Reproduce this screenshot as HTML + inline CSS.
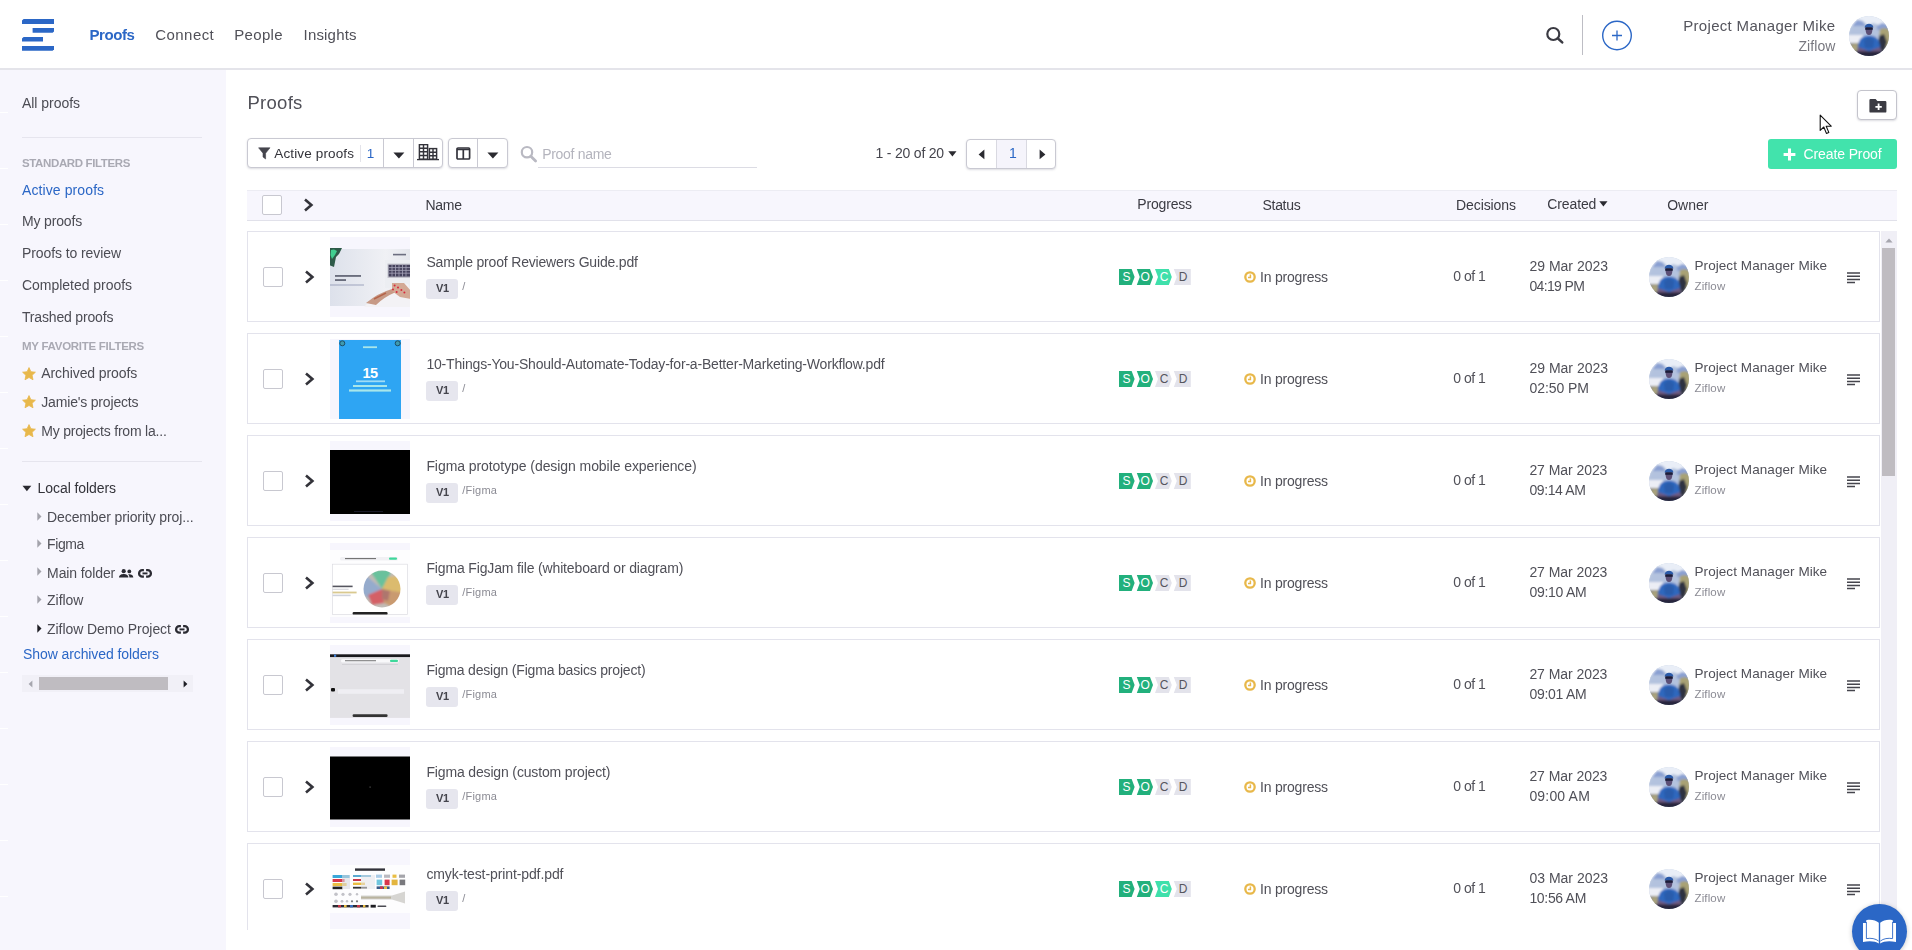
<!DOCTYPE html>
<html lang="en">
<head>
<meta charset="utf-8">
<title>Proofs</title>
<style>
*{box-sizing:border-box;margin:0;padding:0}
html,body{width:1912px;height:950px;overflow:hidden;background:#fff}
body{font-family:"Liberation Sans",sans-serif;position:relative;color:#45454d}
.abs{position:absolute}
span.t{position:absolute;white-space:nowrap;line-height:20px;height:20px}
#hdr{position:absolute;left:0;top:0;width:1912px;height:70px;background:#fff;border-bottom:2px solid #e4e4ea}
#side{position:absolute;left:0;top:70px;width:226px;height:880px;background:#f7f6fd}
.hr{position:absolute;left:22px;width:180px;height:1px;background:#e6e5ee}
.btn{position:absolute;background:#fff;border:1px solid #c9c9d2;border-radius:4px;box-shadow:0 1px 2px rgba(60,60,90,.18)}
.vd{position:absolute;top:0;width:1px;height:100%;background:#c9c9d2}
#thead{position:absolute;left:247px;top:190px;width:1650px;height:31px;background:#f7f6fd;border-top:1px solid #ececf3;border-bottom:1px solid #e1e1ea}
.cb{position:absolute;width:20px;height:20px;background:#fff;border:1px solid #c8c8d0;border-radius:2px}
.row{position:absolute;left:0;width:1633px;height:91px;border:1px solid #e3e3ec;background:#fff}
.row .chev{position:absolute}
.row .thumb{position:absolute;left:82px;top:5px;width:80px;height:80px;background:#f7f6fd;overflow:hidden}
.row .v1{position:absolute;left:178px;top:47px;width:32px;height:20px;background:#e6e6ee;border-radius:3px}
.row .prog{position:absolute;left:871px;top:37px}
.row .clock{position:absolute;left:996px;top:39px}
.row .av{position:absolute;left:1401px;top:25px}
.row .menu{position:absolute;left:1599px;top:40px}
</style>
</head>
<body>
<svg width="0" height="0" style="position:absolute">
<defs>
<g id="pg-base">
<path d="M0 0H12.6L15.6 8L12.6 16H0Z" fill="#22b07c"/>
<path d="M17.8 0H31L34 8L31 16H17.8L20.8 8Z" fill="#22b07c"/>
</g>
<g id="pg-cg">
<use href="#pg-base"/>
<path d="M36 0H49.8L52.8 8L49.8 16H36L39 8Z" fill="#e3e3eb"/>
<path d="M54.8 0H71.8V16H54.8L57.8 8Z" fill="#e3e3eb"/>
<g font-family="Liberation Sans, sans-serif" font-size="12" text-anchor="middle">
<text x="7.6" y="12.3" fill="#fff">S</text><text x="26.2" y="12.3" fill="#fff">O</text><text x="45" y="12.3" fill="#55555d">C</text><text x="64" y="12.3" fill="#55555d">D</text></g>
</g>
<g id="pg-cl">
<use href="#pg-base"/>
<path d="M36 0H49.8L52.8 8L49.8 16H36L39 8Z" fill="#3fe0ab"/>
<path d="M54.8 0H71.8V16H54.8L57.8 8Z" fill="#e3e3eb"/>
<g font-family="Liberation Sans, sans-serif" font-size="12" text-anchor="middle">
<text x="7.6" y="12.3" fill="#fff">S</text><text x="26.2" y="12.3" fill="#fff">O</text><text x="45" y="12.3" fill="#fff">C</text><text x="64" y="12.3" fill="#55555d">D</text></g>
</g>
<g id="clock"><circle cx="6" cy="6" r="4.7" fill="none" stroke="#e8b84a" stroke-width="2.3"/><path d="M6.4 3.4V6.4H4" fill="none" stroke="#e8b84a" stroke-width="1.5"/></g>
<g id="menu"><path d="M0 1H13M0 4.2H13M0 7.4H13M0 10.6H8" stroke="#45454d" stroke-width="1.5" fill="none"/></g>
<g id="avatar">
<clipPath id="avc"><circle cx="20" cy="20" r="20"/></clipPath>
<filter id="bl1" x="-10%" y="-10%" width="120%" height="120%"><feGaussianBlur stdDeviation="0.85"/></filter>
<g clip-path="url(#avc)">
<rect width="40" height="40" fill="#c3cfe3"/>
<g filter="url(#bl1)">
<rect x="-2" y="-2" width="44" height="12" fill="#e9eef7"/>
<path d="M2 12L8 4L14 5L19 10L24 7L30 9L34 7L42 12V22H-2Z" fill="#b3c2de"/>
<path d="M3 10L8 4L13 5L17 10Z" fill="#8aa0d2"/>
<path d="M28 10L33 7L40 9V14H28Z" fill="#8aa0d2"/>
<rect x="-2" y="19" width="16" height="9" fill="#eceef5"/>
<rect x="-2" y="27" width="44" height="16" fill="#8c8b86"/>
<path d="M31 13L36 12L42 14V30H33L30 22Z" fill="#a9a274"/>
<path d="M30 20L35 18L38 26L35 36L29 32Z" fill="#2f3340"/>
<path d="M2 29L8 27L10 38L3 38Z" fill="#a9a27c"/>
<path d="M8.6 36C8.6 24 12 19.4 20 19.4S31.4 24 31.4 36Z" fill="#2e68be"/>
<path d="M15 24L20 21L25 24L24 32H16Z" fill="#2a5cab"/>
<path d="M9 31L20 35L31 31L32 36L20 38L8 36Z" fill="#6f5a80"/>
<rect x="4" y="35.4" width="32" height="7" fill="#28283c"/>
</g>
<g filter="url(#bl4)">
<ellipse cx="20" cy="14.2" rx="3.3" ry="4.8" fill="#5c5076"/>
<path d="M15.6 11.6C15.6 6.4 24.4 6.4 24.4 11.6Z" fill="#2b5aa8"/>
<rect x="16.2" y="11.4" width="7.6" height="2.4" fill="#1c1c38"/>
</g>
</g>
</g>
<filter id="bl4" x="-10%" y="-10%" width="120%" height="120%"><feGaussianBlur stdDeviation="0.35"/></filter>
<!-- thumbnails -->
<filter id="bl3" x="-5%" y="-5%" width="110%" height="110%"><feGaussianBlur stdDeviation="0.9"/></filter>
<filter id="bl2" x="-5%" y="-5%" width="110%" height="110%"><feGaussianBlur stdDeviation="0.5"/></filter>
<g id="t1">
<linearGradient id="t1g" x1="0" y1="0" x2="1" y2="0"><stop offset="0" stop-color="#dde1eb"/><stop offset=".45" stop-color="#e9ebf1"/><stop offset=".7" stop-color="#f0f1f5"/><stop offset="1" stop-color="#e4e6ec"/></linearGradient>
<rect x="0" y="12" width="80" height="57" fill="url(#t1g)"/>
<g filter="url(#bl2)">
<rect x="55" y="23" width="27" height="28" fill="#eceef2"/>
<rect x="57.5" y="26.6" width="24" height="14.4" fill="#c4c4cd"/>
<rect x="58.6" y="27.8" width="23" height="11.8" fill="#45425c"/>
<path d="M58.6 30.6H82M58.6 33.4H82M58.6 36.2H82M62 27.8V39.6M65.5 27.8V39.6M69 27.8V39.6M72.5 27.8V39.6M76 27.8V39.6" stroke="#a5a3b8" stroke-width=".8"/>
<path d="M-1 11H12L9 17L6 20L4 30L-1 28Z" fill="#2f5a48"/>
<path d="M1 13L4 12.5L7 14L5 18L2 22L0.5 18Z" fill="#3fcf90"/>
<path d="M34 70Q44 58 62 52L66 46L78 47L82 56V70Z" fill="#f3f2f5"/>
<path d="M36 66Q48 56 62 52L66 55Q54 60 46 68Z" fill="#c79a86"/>
<path d="M62 46L74 46L81 54V62L70 60L62 54Z" fill="#d3a995"/>
<path d="M44 62L56 56" stroke="#b5654a" stroke-width="1.4"/>
</g>
<rect x="63" y="16.8" width="13" height="1.6" fill="#6c6e80"/>
<rect x="5" y="38.2" width="26" height="1.5" fill="#4d5062"/>
<rect x="5" y="42.3" width="11" height="1.5" fill="#4d5062"/>
<rect x="0" y="47.6" width="34" height="0.8" fill="#8d95b2"/>
<g fill="#d8283c"><circle cx="64.6" cy="48.6" r="1"/><circle cx="68" cy="50.4" r="1"/><circle cx="71.4" cy="53" r="1"/><circle cx="74.4" cy="55.6" r="1"/><circle cx="63" cy="52.6" r="1"/><circle cx="66.6" cy="55" r="1"/></g>
</g>
<g id="t2">
<rect x="9" y="1" width="62" height="79" fill="#2ea5f3"/>
<circle cx="12.3" cy="4.3" r="2.5" fill="#3f9ab0" stroke="#1d4e66" stroke-width="1"/><circle cx="67.7" cy="4.3" r="2.5" fill="#3f9ab0" stroke="#1d4e66" stroke-width="1"/>
<rect x="33" y="7.3" width="14" height="1.8" fill="#a8e6ea"/>
<text x="40" y="38.6" font-family="Liberation Sans, sans-serif" font-size="14.5" font-weight="bold" fill="#fff" text-anchor="middle" letter-spacing="-0.6">15</text>
<rect x="26" y="41.4" width="29" height="1.8" fill="#9fdcf6"/>
<rect x="23" y="46" width="34" height="2" fill="#a8e6ea"/>
<rect x="19" y="50.4" width="42" height="2.2" fill="#a8e6ea"/>
</g>
<g id="t3"><rect x="0" y="9" width="80" height="64" fill="#000"/><rect x="24" y="70" width="29" height=".6" fill="#2a2a44"/></g>
<g id="t4">
<rect x="0" y="7" width="80" height="67" fill="#fdfdfe"/>
<rect x="10" y="14" width="58" height="3.4" rx="1.5" fill="#f1f1f4"/>
<rect x="15" y="15.2" width="31" height="0.9" fill="#555"/>
<rect x="59" y="14.6" width="8" height="2.2" rx="1" fill="#3fd89b"/>
<rect x="2.4" y="21.2" width="75" height="50.2" fill="#fff" stroke="#dcdce2" stroke-width="0.7"/>
<clipPath id="ballc"><circle cx="52" cy="46" r="18.5"/></clipPath>
<g clip-path="url(#ballc)"><g filter="url(#bl3)">
<rect x="28" y="22" width="48" height="48" fill="#bdb7b0"/>
<path d="M52 46L33 30L30 50L40 56Z" fill="#7f9fd0"/>
<path d="M52 46L40 28L62 26L58 36Z" fill="#3fbf8c"/>
<path d="M52 46L58 34L74 32L74 52Z" fill="#e3b74a"/>
<path d="M52 46L74 50L66 66L54 60Z" fill="#c9874c"/>
<path d="M52 46L54 60L42 62L38 52Z" fill="#d8363e"/>
<path d="M52 46L60 48L58 58L52 56Z" fill="#a2544a"/>
<rect x="28" y="22" width="48" height="48" fill="#c9c6c4" opacity=".3"/>
</g></g>
<rect x="2.6" y="42.6" width="20" height="1.6" fill="#55555f"/>
<rect x="2.6" y="45.8" width="16" height="0.8" fill="#c4c4cc"/>
<rect x="2.6" y="48.6" width="24" height="1.8" fill="#d9c98f"/>
<rect x="2.6" y="51.6" width="18" height="1.6" fill="#cfd3dc"/>
<rect x="22.6" y="69" width="35" height="2.6" rx="1.2" fill="#222"/>
</g>
<g id="t5">
<rect x="0" y="9.3" width="80" height="3" fill="#1a1a1e"/>
<rect x="0" y="12.3" width="80" height="60.6" fill="#e3e2e6"/>
<rect x="4" y="9.6" width="2.2" height="2.2" fill="#3e7fd8"/>
<rect x="11" y="14" width="58" height="3.6" rx="1.6" fill="#f8f8fa"/>
<rect x="15" y="15.3" width="31" height="0.9" fill="#666"/>
<rect x="60" y="14.7" width="8" height="2.2" rx="1" fill="#3fd89b"/>
<rect x="12" y="19" width="56" height="0.8" fill="#cfcfd4"/>
<rect x="1" y="43" width="4" height="3.4" rx="1" fill="#111"/>
<rect x="8" y="44.2" width="66" height="4.6" fill="#f1f0f4" opacity=".85"/>
<rect x="22.6" y="69.2" width="35" height="2.7" rx="1.2" fill="#333"/>
</g>
<g id="t6"><rect x="0" y="9.5" width="80" height="63" fill="#000"/><rect x="39.5" y="39.5" width="1.2" height="1.2" fill="#555"/></g>
<g id="t7">
<rect x="0" y="16" width="80" height="48" fill="#fdfdfe"/>
<rect x="25" y="19.4" width="30" height="2.4" fill="#33333a"/>
<rect x="2.6" y="26" width="17" height="3" fill="#39a6d8"/><rect x="2.6" y="30" width="12" height="3" fill="#d8364a"/><rect x="2.6" y="34" width="14" height="3" fill="#e9bd43"/><rect x="2.6" y="37.6" width="10" height="2.6" fill="#222"/>
<rect x="12" y="26" width="8" height="14" fill="#d9d9de" opacity=".6"/>
<rect x="23" y="26" width="18" height="2" fill="#5aa9d0"/><rect x="23" y="30" width="8" height="2" fill="#c8364a"/><rect x="23" y="33.6" width="12" height="2.4" fill="#e9bd43"/><rect x="23" y="37.8" width="14" height="1.8" fill="#333"/>
<rect x="31" y="26" width="14" height="14" fill="#e4e4e8" opacity=".55"/>
<rect x="46" y="25.6" width="6" height="3.2" fill="#a9cbe6"/><rect x="54" y="25.6" width="6" height="3.2" fill="#b9b9c1"/><rect x="62.5" y="25.6" width="4" height="3.2" fill="#e9bd43"/><rect x="69" y="25.6" width="6" height="3.2" fill="#a4a4aa"/>
<rect x="46.6" y="30.6" width="5.6" height="5.6" fill="#6fc6de"/><rect x="54.6" y="30.6" width="5" height="5.6" fill="#d8364a"/><rect x="61.6" y="30.6" width="6" height="5.6" fill="#e3b53e"/><rect x="69.6" y="30.6" width="5.6" height="5.6" fill="#77777c"/>
<rect x="46.6" y="37.4" width="13" height="2.6" fill="#3a5a86"/><rect x="50" y="37.4" width="3" height="2.6" fill="#c8364a"/><rect x="54" y="37.4" width="3" height="2.6" fill="#e9bd43"/>
<g fill="#c2c2c8"><circle cx="6" cy="45.3" r="1.8"/><circle cx="13" cy="45.3" r="1.6"/><circle cx="20" cy="45.3" r="1.6"/><circle cx="27" cy="45.3" r="1.2"/><circle cx="6" cy="52.3" r="1.8"/><circle cx="12" cy="52.3" r="1.4"/><circle cx="17" cy="52.3" r="1.2"/></g>
<g fill="#77777c"><circle cx="22" cy="52.3" r="1.1"/><circle cx="27" cy="52.3" r="1.1"/></g>
<path d="M31 46.6H62L75 42.6V54.6L62 50.6H31Z" fill="#d6d5d2"/>
<rect x="31" y="47.6" width="30" height="2" fill="#b9b49f"/>
<rect x="2.6" y="56" width="36" height="2.4" fill="#2b2b33"/>
<rect x="8" y="56" width="3" height="2.4" fill="#c8364a"/><rect x="14" y="56" width="2.6" height="2.4" fill="#e9bd43"/><rect x="20" y="56" width="3" height="2.4" fill="#3a6fc0"/><rect x="27" y="56" width="3" height="2.4" fill="#c8364a"/><rect x="33" y="56" width="2.4" height="2.4" fill="#e9bd43"/>
<rect x="40.6" y="55.8" width="5.2" height="2.8" fill="#1d1d22"/>
<rect x="47.4" y="56.4" width="9" height="1.6" rx=".8" fill="#4a4a52"/>
</g>
</defs>
</svg>

<!-- ================= HEADER ================= -->
<div id="hdr">
<svg class="abs" style="left:22px;top:19px" width="32" height="32" viewBox="0 0 32 32">
<g fill="#2b67c6">
<path d="M1.6 0H32V4.9H0V1.6Z"/>
<path d="M10.6 9H32V12.4L30.6 13.8H10.6Z"/>
<path d="M1.6 17.9H21V22.6H0V19.5Z"/>
<path d="M0 26.9H32V30.3L30.6 31.7H0Z"/>
</g></svg>
<!-- search -->
<svg class="abs" style="left:1546px;top:26px" width="19" height="19" viewBox="0 0 19 19"><circle cx="7.3" cy="8" r="6" fill="none" stroke="#3a3a42" stroke-width="2.2"/><path d="M11.8 12.4L16.2 16.4" stroke="#3a3a42" stroke-width="2.6" stroke-linecap="round"/></svg>
<div class="abs" style="left:1582px;top:15px;width:1px;height:40px;background:#bdbdc4"></div>
<svg class="abs" style="left:1601px;top:20px" width="32" height="32" viewBox="0 0 32 32"><circle cx="16" cy="15.5" r="14.3" fill="none" stroke="#2b67c6" stroke-width="1.4"/><path d="M16 10.5V20.5M11 15.5H21" stroke="#2b67c6" stroke-width="1.3"/></svg>
<svg class="abs" style="left:1849px;top:16px" width="40" height="40" viewBox="0 0 40 40"><use href="#avatar"/></svg>
</div>

<!-- ================= SIDEBAR ================= -->
<div id="side"></div>
<div class="abs" style="left:0;top:112px;width:8px;height:1px;background:#fff"></div><div class="abs" style="left:0;top:168px;width:8px;height:1px;background:#fff"></div><div class="abs" style="left:0;top:224px;width:8px;height:1px;background:#fff"></div><div class="abs" style="left:0;top:280px;width:8px;height:1px;background:#fff"></div><div class="abs" style="left:0;top:336px;width:8px;height:1px;background:#fff"></div><div class="abs" style="left:0;top:392px;width:8px;height:1px;background:#fff"></div><div class="abs" style="left:0;top:448px;width:8px;height:1px;background:#fff"></div><div class="abs" style="left:0;top:504px;width:8px;height:1px;background:#fff"></div><div class="abs" style="left:0;top:560px;width:8px;height:1px;background:#fff"></div><div class="abs" style="left:0;top:616px;width:8px;height:1px;background:#fff"></div><div class="abs" style="left:0;top:672px;width:8px;height:1px;background:#fff"></div><div class="abs" style="left:0;top:728px;width:8px;height:1px;background:#fff"></div><div class="abs" style="left:0;top:784px;width:8px;height:1px;background:#fff"></div><div class="abs" style="left:0;top:840px;width:8px;height:1px;background:#fff"></div><div class="abs" style="left:0;top:896px;width:8px;height:1px;background:#fff"></div>
<div class="hr" style="top:137px"></div>
<div class="hr" style="top:461px"></div>
<!-- stars -->
<svg class="abs" style="left:21.5px;top:366.5px" width="14" height="14" viewBox="0 0 14 14"><use href="#star"/></svg>
<svg class="abs" style="left:21.5px;top:395.3px" width="14" height="14" viewBox="0 0 14 14"><use href="#star"/></svg>
<svg class="abs" style="left:21.5px;top:424.4px" width="14" height="14" viewBox="0 0 14 14"><use href="#star"/></svg>
<svg width="0" height="0" style="position:absolute"><defs>
<path id="star" d="M7 .6L8.9 4.7L13.4 5.2L10.1 8.3L11 12.8L7 10.5L3 12.8L3.9 8.3L.6 5.2L5.1 4.7Z" fill="#e8b84b" stroke="#e8b84b" stroke-width=".8" stroke-linejoin="round"/>
<g id="link" fill="none" stroke="#2a2a32"><path d="M5.9 1.15H4.35A3.25 3.25 0 0 0 4.35 7.65H5.9M8.1 1.15H9.65A3.25 3.25 0 0 1 9.65 7.65H8.1" stroke-width="2.25"/><path d="M4.5 4.4H9.5" stroke-width="1.9"/></g>
<g id="ppl" fill="#2a2a32"><circle cx="4.7" cy="2.2" r="2.1"/><path d="M0 8.6C0 5.6 3 5 4.7 5S9.4 5.6 9.4 8.6Z"/><circle cx="10.3" cy="2.4" r="1.9"/><path d="M10.4 8.6C10.4 6.8 9.8 5.8 9 5.3C11.4 4.8 14.3 5.6 14.3 8.6Z"/></g>
</defs></svg>
<!-- tree arrows -->
<svg class="abs" style="left:22px;top:485px" width="10" height="7" viewBox="0 0 10 7"><path d="M.5 .8H9.3L4.9 6.2Z" fill="#2a2a30"/></svg>
<svg class="abs" style="left:36.6px;top:511.6px" width="5" height="9" viewBox="0 0 5 9"><path d="M.3 .3L4.5 4.5L.3 8.7Z" fill="#a3a3ab"/></svg>
<svg class="abs" style="left:36.6px;top:538.6px" width="5" height="9" viewBox="0 0 5 9"><path d="M.3 .3L4.5 4.5L.3 8.7Z" fill="#a3a3ab"/></svg>
<svg class="abs" style="left:36.6px;top:567.4px" width="5" height="9" viewBox="0 0 5 9"><path d="M.3 .3L4.5 4.5L.3 8.7Z" fill="#a3a3ab"/></svg>
<svg class="abs" style="left:36.6px;top:595px" width="5" height="9" viewBox="0 0 5 9"><path d="M.3 .3L4.5 4.5L.3 8.7Z" fill="#a3a3ab"/></svg>
<svg class="abs" style="left:36.6px;top:623.8px" width="5" height="9" viewBox="0 0 5 9"><path d="M.3 .3L4.5 4.5L.3 8.7Z" fill="#1e1e24"/></svg>
<svg class="abs" style="left:119.4px;top:568.9px" width="15" height="9" viewBox="0 0 15 9"><use href="#ppl"/></svg>
<svg class="abs" style="left:137.5px;top:569px" width="14" height="9" viewBox="0 0 14 9"><use href="#link"/></svg>
<svg class="abs" style="left:174.6px;top:624.9px" width="14" height="9" viewBox="0 0 14 9"><use href="#link"/></svg>
<!-- sidebar scrollbar -->
<div class="abs" style="left:22px;top:675px;width:171px;height:17px;background:#f1f0f7"></div>
<div class="abs" style="left:39px;top:677px;width:129px;height:13px;background:#bfbcc1"></div>
<svg class="abs" style="left:28px;top:679.5px" width="5" height="8" viewBox="0 0 5 8"><path d="M4.4 .4L.6 4L4.4 7.6Z" fill="#a6a6ae"/></svg>
<svg class="abs" style="left:182.6px;top:679.5px" width="5" height="8" viewBox="0 0 5 8"><path d="M.6 .4L4.4 4L.6 7.6Z" fill="#1e1e24"/></svg>

<!-- ================= TOOLBAR ================= -->
<div class="btn" style="left:247px;top:138px;width:196px;height:29.5px">
<div class="vd" style="left:135px"></div><div class="vd" style="left:165px"></div>
<div class="abs" style="left:111.5px;top:6px;width:1px;height:17px;background:#e3e3ea"></div>
<svg class="abs" style="left:10px;top:7.5px" width="13" height="13" viewBox="0 0 13 13"><path d="M.6 .8H12L7.6 6.2V12L5 10V6.2Z" fill="#45454d" stroke="#45454d" stroke-width=".6" stroke-linejoin="round"/></svg>
<svg class="abs" style="left:144.5px;top:12.5px" width="12" height="7" viewBox="0 0 12 7"><path d="M.4 .4H11.4L5.9 6.6Z" fill="#2a2a30"/></svg>
<svg class="abs" style="left:169px;top:5px" width="22" height="17" viewBox="0 0 22 17">
<g fill="none" stroke="#33333a" stroke-width="1.45">
<rect x="2.4" y=".6" width="8.2" height="14.6"/><rect x="12.4" y="4.6" width="7.2" height="10.6"/>
<path d="M2.4 4.2H10.6M2.4 7.8H10.6M2.4 11.4H10.6M6.5 .6V15.2M12.4 8.2H19.6M12.4 11.8H19.6M16 4.6V15.2"/>
<path d="M0 15.6H22" stroke-width="1.3"/></g></svg>
</div>
<div class="btn" style="left:448px;top:138px;width:60px;height:29.5px">
<div class="vd" style="left:28px"></div>
<svg class="abs" style="left:6.8px;top:8px" width="15" height="13" viewBox="0 0 15 13"><rect x="1" y="1" width="12.6" height="11" rx="1" fill="none" stroke="#33333b" stroke-width="1.7"/><path d="M1 2.5H13.6M7.3 2V12" stroke="#33333b" stroke-width="1.7"/></svg>
<svg class="abs" style="left:38px;top:12.5px" width="12" height="7" viewBox="0 0 12 7"><path d="M.4 .4H11.4L5.9 6.6Z" fill="#2a2a30"/></svg>
</div>
<svg class="abs" style="left:520px;top:145px" width="18" height="18" viewBox="0 0 18 18"><circle cx="7" cy="7.2" r="5.2" fill="none" stroke="#b9b9c2" stroke-width="2.2"/><path d="M10.8 11.2L15.6 16" stroke="#b9b9c2" stroke-width="2.8" stroke-linecap="round"/></svg>
<div class="abs" style="left:538px;top:167px;width:219px;height:1px;background:#dcdce4"></div>
<svg class="abs" style="left:948px;top:150.5px" width="9" height="6" viewBox="0 0 9 6"><path d="M.3 .3H8.5L4.4 5.4Z" fill="#2a2a30"/></svg>
<div class="btn" style="left:966px;top:139px;width:90px;height:30px">
<div class="abs" style="left:29px;top:0;width:30px;height:28px;background:#f5f4fb"></div>
<div class="vd" style="left:29px;background:#d9d9e1"></div><div class="vd" style="left:59px;background:#d9d9e1"></div>
<svg class="abs" style="left:10.5px;top:9px" width="7" height="11" viewBox="0 0 7 11"><path d="M6.4 .6L.6 5.4L6.4 10.2Z" fill="#2a2a30"/></svg>
<svg class="abs" style="left:71.5px;top:9px" width="7" height="11" viewBox="0 0 7 11"><path d="M.6 .6L6.4 5.4L.6 10.2Z" fill="#2a2a30"/></svg>
</div>
<!-- folder button -->
<div class="btn" style="left:1857px;top:90px;width:40px;height:30px;border-color:#c4c4cc">
<svg class="abs" style="left:11px;top:8px" width="18" height="14" viewBox="0 0 18 14"><path d="M1.6 0H6.6L8.4 2H16.2Q17.4 2 17.4 3.2V12.4Q17.4 13.6 16.2 13.6H1.6Q.4 13.6 .4 12.4V1.2Q.4 0 1.6 0Z" fill="#3a3a42"/><path d="M9.6 4.6V11M6.4 7.8H12.8" stroke="#fff" stroke-width="1.8"/></svg>
</div>
<!-- create proof -->
<div class="abs" style="left:1768px;top:139px;width:129px;height:30px;background:#42e3ac;border-radius:3px">
<svg class="abs" style="left:15px;top:8.5px" width="13" height="13" viewBox="0 0 13 13"><path d="M6.5 .6V12.4M.6 6.5H12.4" stroke="#fff" stroke-width="3"/></svg>
</div>
<!-- cursor -->
<svg class="abs" style="left:1819px;top:114px" width="14" height="21" viewBox="0 0 14 21"><path d="M1.2 1.2V16.4L4.8 13L7.4 19.4L9.8 18.4L7.2 12.2H12.2Z" fill="#fff" stroke="#111" stroke-width="1.1" stroke-linejoin="round"/></svg>

<!-- ================= TABLE ================= -->
<div id="thead">
<div class="cb" style="left:15px;top:4px"></div>
<svg class="abs" style="left:56px;top:6.7px" width="11" height="14" viewBox="0 0 11 14"><path d="M2 1.4L8.4 7L2 12.6" fill="none" stroke="#33333a" stroke-width="2.6"/></svg>
<svg class="abs" style="left:1351.5px;top:10px" width="9" height="6" viewBox="0 0 9 6"><path d="M.3 .3H8.5L4.4 5.4Z" fill="#2a2a30"/></svg>
</div>
<div class="abs" style="left:247px;top:231px;width:1633px;height:699px;overflow:hidden">
<div class="row" style="top:0px">
<div class="cb" style="left:15px;top:35px"></div>
<svg class="chev" style="left:56px;top:37.5px" width="11" height="14" viewBox="0 0 11 14"><path d="M2 1.4L8.4 7L2 12.6" fill="none" stroke="#33333a" stroke-width="2.6" stroke-linejoin="miter"/></svg>
<div class="thumb"><svg width="80" height="80" viewBox="0 0 80 80"><use href="#t1"/></svg></div>
<div class="v1"></div>
<svg class="prog" width="72" height="16" viewBox="0 0 72 16"><use href="#pg-cl"/></svg>
<svg class="clock" width="12" height="12" viewBox="0 0 12 12"><use href="#clock"/></svg>
<svg class="av" width="40" height="40" viewBox="0 0 40 40"><use href="#avatar"/></svg>
<svg class="menu" width="14" height="12" viewBox="0 0 14 12"><use href="#menu"/></svg>
</div>
<div class="row" style="top:102px">
<div class="cb" style="left:15px;top:35px"></div>
<svg class="chev" style="left:56px;top:37.5px" width="11" height="14" viewBox="0 0 11 14"><path d="M2 1.4L8.4 7L2 12.6" fill="none" stroke="#33333a" stroke-width="2.6" stroke-linejoin="miter"/></svg>
<div class="thumb"><svg width="80" height="80" viewBox="0 0 80 80"><use href="#t2"/></svg></div>
<div class="v1"></div>
<svg class="prog" width="72" height="16" viewBox="0 0 72 16"><use href="#pg-cg"/></svg>
<svg class="clock" width="12" height="12" viewBox="0 0 12 12"><use href="#clock"/></svg>
<svg class="av" width="40" height="40" viewBox="0 0 40 40"><use href="#avatar"/></svg>
<svg class="menu" width="14" height="12" viewBox="0 0 14 12"><use href="#menu"/></svg>
</div>
<div class="row" style="top:204px">
<div class="cb" style="left:15px;top:35px"></div>
<svg class="chev" style="left:56px;top:37.5px" width="11" height="14" viewBox="0 0 11 14"><path d="M2 1.4L8.4 7L2 12.6" fill="none" stroke="#33333a" stroke-width="2.6" stroke-linejoin="miter"/></svg>
<div class="thumb"><svg width="80" height="80" viewBox="0 0 80 80"><use href="#t3"/></svg></div>
<div class="v1"></div>
<svg class="prog" width="72" height="16" viewBox="0 0 72 16"><use href="#pg-cg"/></svg>
<svg class="clock" width="12" height="12" viewBox="0 0 12 12"><use href="#clock"/></svg>
<svg class="av" width="40" height="40" viewBox="0 0 40 40"><use href="#avatar"/></svg>
<svg class="menu" width="14" height="12" viewBox="0 0 14 12"><use href="#menu"/></svg>
</div>
<div class="row" style="top:306px">
<div class="cb" style="left:15px;top:35px"></div>
<svg class="chev" style="left:56px;top:37.5px" width="11" height="14" viewBox="0 0 11 14"><path d="M2 1.4L8.4 7L2 12.6" fill="none" stroke="#33333a" stroke-width="2.6" stroke-linejoin="miter"/></svg>
<div class="thumb"><svg width="80" height="80" viewBox="0 0 80 80"><use href="#t4"/></svg></div>
<div class="v1"></div>
<svg class="prog" width="72" height="16" viewBox="0 0 72 16"><use href="#pg-cg"/></svg>
<svg class="clock" width="12" height="12" viewBox="0 0 12 12"><use href="#clock"/></svg>
<svg class="av" width="40" height="40" viewBox="0 0 40 40"><use href="#avatar"/></svg>
<svg class="menu" width="14" height="12" viewBox="0 0 14 12"><use href="#menu"/></svg>
</div>
<div class="row" style="top:408px">
<div class="cb" style="left:15px;top:35px"></div>
<svg class="chev" style="left:56px;top:37.5px" width="11" height="14" viewBox="0 0 11 14"><path d="M2 1.4L8.4 7L2 12.6" fill="none" stroke="#33333a" stroke-width="2.6" stroke-linejoin="miter"/></svg>
<div class="thumb"><svg width="80" height="80" viewBox="0 0 80 80"><use href="#t5"/></svg></div>
<div class="v1"></div>
<svg class="prog" width="72" height="16" viewBox="0 0 72 16"><use href="#pg-cg"/></svg>
<svg class="clock" width="12" height="12" viewBox="0 0 12 12"><use href="#clock"/></svg>
<svg class="av" width="40" height="40" viewBox="0 0 40 40"><use href="#avatar"/></svg>
<svg class="menu" width="14" height="12" viewBox="0 0 14 12"><use href="#menu"/></svg>
</div>
<div class="row" style="top:510px">
<div class="cb" style="left:15px;top:35px"></div>
<svg class="chev" style="left:56px;top:37.5px" width="11" height="14" viewBox="0 0 11 14"><path d="M2 1.4L8.4 7L2 12.6" fill="none" stroke="#33333a" stroke-width="2.6" stroke-linejoin="miter"/></svg>
<div class="thumb"><svg width="80" height="80" viewBox="0 0 80 80"><use href="#t6"/></svg></div>
<div class="v1"></div>
<svg class="prog" width="72" height="16" viewBox="0 0 72 16"><use href="#pg-cg"/></svg>
<svg class="clock" width="12" height="12" viewBox="0 0 12 12"><use href="#clock"/></svg>
<svg class="av" width="40" height="40" viewBox="0 0 40 40"><use href="#avatar"/></svg>
<svg class="menu" width="14" height="12" viewBox="0 0 14 12"><use href="#menu"/></svg>
</div>
<div class="row" style="top:612px">
<div class="cb" style="left:15px;top:35px"></div>
<svg class="chev" style="left:56px;top:37.5px" width="11" height="14" viewBox="0 0 11 14"><path d="M2 1.4L8.4 7L2 12.6" fill="none" stroke="#33333a" stroke-width="2.6" stroke-linejoin="miter"/></svg>
<div class="thumb"><svg width="80" height="80" viewBox="0 0 80 80"><use href="#t7"/></svg></div>
<div class="v1"></div>
<svg class="prog" width="72" height="16" viewBox="0 0 72 16"><use href="#pg-cl"/></svg>
<svg class="clock" width="12" height="12" viewBox="0 0 12 12"><use href="#clock"/></svg>
<svg class="av" width="40" height="40" viewBox="0 0 40 40"><use href="#avatar"/></svg>
<svg class="menu" width="14" height="12" viewBox="0 0 14 12"><use href="#menu"/></svg>
</div>
</div>
<!-- scrollbar -->
<div class="abs" style="left:1881px;top:231px;width:16px;height:699px;background:#f0eff6"></div>
<svg class="abs" style="left:1884.5px;top:920.5px" width="8" height="5" viewBox="0 0 8 5"><path d="M.4 .4L4 4.4L7.6 .4Z" fill="#45454d"/></svg>
<div class="abs" style="left:1882px;top:248px;width:13px;height:228px;background:#bfbcc1"></div>
<svg class="abs" style="left:1884.5px;top:237.5px" width="8" height="5" viewBox="0 0 8 5"><path d="M.4 4.6L4 .6L7.6 4.6Z" fill="#a6a6ae"/></svg>
<!-- help button -->
<div class="abs" style="left:1852px;top:904px;width:55px;height:55px;border-radius:50%;background:#2b67c6;box-shadow:0 1px 5px rgba(0,0,0,.22)">
<svg class="abs" style="left:10.5px;top:15px" width="33" height="25" viewBox="0 0 33 25"><path d="M0 4H3.2V1.2C8 .2 12.8 1.2 15.8 3.8V24.4C12.4 22 6 21.6 0 23Z" fill="#fff"/><path d="M33 4H29.8V1.2C25 .2 20.2 1.2 17.2 3.8V24.4C20.6 22 27 21.6 33 23Z" fill="#fff"/><path d="M3.4 3V19.6C8 18.8 12.6 19.6 15.6 22M29.6 3V19.6C25 18.8 20.4 19.6 17.4 22" stroke="#2b67c6" stroke-width=".9" fill="none"/></svg>
</div>

<div id="tl" style="position:absolute;left:0;top:0;width:1912px;height:950px;will-change:transform">
<span class="t" id="t0" style="left:89.4px;top:24.8px;font-size:15px;color:#2b67c6;font-weight:bold;letter-spacing:-0.40px;">Proofs</span>
<span class="t" id="t1" style="left:155.3px;top:24.8px;font-size:15px;color:#505058;letter-spacing:0.43px;">Connect</span>
<span class="t" id="t2" style="left:234.2px;top:24.8px;font-size:15px;color:#505058;letter-spacing:0.35px;">People</span>
<span class="t" id="t3" style="left:303.6px;top:24.8px;font-size:15px;color:#505058;letter-spacing:0.17px;">Insights</span>
<span class="t" id="t4" style="left:1683.2px;top:15.6px;font-size:15px;color:#55555d;letter-spacing:0.32px;">Project Manager Mike</span>
<span class="t" id="t5" style="left:1798.5px;top:36.4px;font-size:14px;color:#77777f;letter-spacing:0.07px;">Ziflow</span>
<span class="t" id="t6" style="left:22.0px;top:93.1px;font-size:14px;color:#4c4c54;letter-spacing:-0.04px;">All proofs</span>
<span class="t" id="t7" style="left:22.0px;top:153.3px;font-size:11.5px;color:#a9a9b3;font-weight:bold;letter-spacing:-0.37px;">STANDARD FILTERS</span>
<span class="t" id="t8" style="left:22.0px;top:179.5px;font-size:14px;color:#2b67c6;letter-spacing:0.10px;">Active proofs</span>
<span class="t" id="t9" style="left:22.0px;top:211.1px;font-size:14px;color:#4c4c54;letter-spacing:-0.16px;">My proofs</span>
<span class="t" id="t10" style="left:22.0px;top:243.1px;font-size:14px;color:#4c4c54;letter-spacing:-0.09px;">Proofs to review</span>
<span class="t" id="t11" style="left:22.0px;top:275.2px;font-size:14px;color:#4c4c54;letter-spacing:-0.03px;">Completed proofs</span>
<span class="t" id="t12" style="left:22.0px;top:307.1px;font-size:14px;color:#4c4c54;letter-spacing:-0.17px;">Trashed proofs</span>
<span class="t" id="t13" style="left:22.0px;top:336.2px;font-size:11.5px;color:#a9a9b3;font-weight:bold;letter-spacing:-0.27px;">MY FAVORITE FILTERS</span>
<span class="t" id="t14" style="left:41.3px;top:363.4px;font-size:14px;color:#4c4c54;letter-spacing:-0.09px;">Archived proofs</span>
<span class="t" id="t15" style="left:41.3px;top:392.2px;font-size:14px;color:#4c4c54;letter-spacing:-0.18px;">Jamie's projects</span>
<span class="t" id="t16" style="left:41.3px;top:421.3px;font-size:14px;color:#4c4c54;letter-spacing:-0.21px;">My projects from la...</span>
<span class="t" id="t17" style="left:37.6px;top:478.2px;font-size:14px;color:#33333a;letter-spacing:-0.08px;">Local folders</span>
<span class="t" id="t18" style="left:47.1px;top:507.0px;font-size:14px;color:#4c4c54;letter-spacing:-0.12px;">December priority proj...</span>
<span class="t" id="t19" style="left:47.1px;top:534.0px;font-size:14px;color:#4c4c54;letter-spacing:-0.42px;">Figma</span>
<span class="t" id="t20" style="left:47.1px;top:562.8px;font-size:14px;color:#4c4c54;letter-spacing:-0.11px;">Main folder</span>
<span class="t" id="t21" style="left:47.1px;top:590.4px;font-size:14px;color:#4c4c54;letter-spacing:-0.04px;">Ziflow</span>
<span class="t" id="t22" style="left:47.1px;top:619.2px;font-size:14px;color:#4c4c54;letter-spacing:-0.08px;">Ziflow Demo Project</span>
<span class="t" id="t23" style="left:23.0px;top:644.2px;font-size:14px;color:#2b67c6;letter-spacing:-0.09px;">Show archived folders</span>
<span class="t" id="t24" style="left:247.5px;top:93.1px;font-size:18.5px;color:#505058;letter-spacing:0.27px;">Proofs</span>
<span class="t" id="t25" style="left:274.3px;top:143.6px;font-size:13.5px;color:#33333a;letter-spacing:0.14px;">Active proofs</span>
<span class="t" id="t26" style="left:366.8px;top:143.6px;font-size:13.5px;color:#2b67c6;">1</span>
<span class="t" id="t27" style="left:542.2px;top:144.4px;font-size:14px;color:#b4b4bd;letter-spacing:-0.30px;">Proof name</span>
<span class="t" id="t28" style="left:875.5px;top:143.1px;font-size:14px;color:#45454d;letter-spacing:-0.20px;">1 - 20 of 20</span>
<span class="t" id="t29" style="left:1009.0px;top:143.1px;font-size:14px;color:#2b67c6;letter-spacing:-1.20px;">1</span>
<span class="t" id="t30" style="left:1803.5px;top:144.1px;font-size:14px;color:#ffffff;letter-spacing:-0.11px;">Create Proof</span>
<span class="t" id="t31" style="left:425.4px;top:195.1px;font-size:14px;color:#3b3b43;letter-spacing:-0.26px;">Name</span>
<span class="t" id="t32" style="left:1137.3px;top:194.0px;font-size:14px;color:#3b3b43;letter-spacing:-0.18px;">Progress</span>
<span class="t" id="t33" style="left:1262.5px;top:195.3px;font-size:14px;color:#3b3b43;letter-spacing:-0.30px;">Status</span>
<span class="t" id="t34" style="left:1456.0px;top:195.1px;font-size:14px;color:#3b3b43;letter-spacing:-0.09px;">Decisions</span>
<span class="t" id="t35" style="left:1547.2px;top:193.8px;font-size:14px;color:#3b3b43;letter-spacing:-0.10px;">Created</span>
<span class="t" id="t36" style="left:1667.2px;top:195.1px;font-size:14px;color:#3b3b43;letter-spacing:0.01px;">Owner</span>
<span class="t" id="t37" style="left:426.4px;top:252.4px;font-size:14px;color:#505058;letter-spacing:-0.18px;">Sample proof Reviewers Guide.pdf</span>
<span class="t" id="t38" style="left:436.0px;top:277.8px;font-size:11px;color:#45454d;font-weight:bold;letter-spacing:-0.30px;">V1</span>
<span class="t" id="t39" style="left:462.2px;top:276.2px;font-size:11px;color:#8b8b94;">/</span>
<span class="t" id="t40" style="left:1260.0px;top:266.7px;font-size:14px;color:#505058;letter-spacing:-0.20px;">In progress</span>
<span class="t" id="t41" style="left:1453.3px;top:266.0px;font-size:14px;color:#505058;letter-spacing:-0.49px;">0 of 1</span>
<span class="t" id="t42" style="left:1529.4px;top:256.0px;font-size:14px;color:#505058;letter-spacing:0.01px;">29 Mar 2023</span>
<span class="t" id="t43" style="left:1529.4px;top:276.0px;font-size:14px;color:#505058;letter-spacing:-0.63px;">04:19 PM</span>
<span class="t" id="t44" style="left:1694.5px;top:256.2px;font-size:13.5px;color:#505058;letter-spacing:0.07px;">Project Manager Mike</span>
<span class="t" id="t45" style="left:1694.5px;top:276.1px;font-size:11.5px;color:#8b8b94;letter-spacing:0.13px;">Ziflow</span>
<span class="t" id="t46" style="left:426.4px;top:354.4px;font-size:14px;color:#505058;letter-spacing:-0.19px;">10-Things-You-Should-Automate-Today-for-a-Better-Marketing-Workflow.pdf</span>
<span class="t" id="t47" style="left:436.0px;top:379.8px;font-size:11px;color:#45454d;font-weight:bold;letter-spacing:-0.30px;">V1</span>
<span class="t" id="t48" style="left:462.2px;top:378.2px;font-size:11px;color:#8b8b94;">/</span>
<span class="t" id="t49" style="left:1260.0px;top:368.7px;font-size:14px;color:#505058;letter-spacing:-0.20px;">In progress</span>
<span class="t" id="t50" style="left:1453.3px;top:368.0px;font-size:14px;color:#505058;letter-spacing:-0.49px;">0 of 1</span>
<span class="t" id="t51" style="left:1529.4px;top:358.0px;font-size:14px;color:#505058;letter-spacing:0.01px;">29 Mar 2023</span>
<span class="t" id="t52" style="left:1529.4px;top:378.0px;font-size:14px;color:#505058;letter-spacing:-0.04px;">02:50 PM</span>
<span class="t" id="t53" style="left:1694.5px;top:358.2px;font-size:13.5px;color:#505058;letter-spacing:0.07px;">Project Manager Mike</span>
<span class="t" id="t54" style="left:1694.5px;top:378.1px;font-size:11.5px;color:#8b8b94;letter-spacing:0.13px;">Ziflow</span>
<span class="t" id="t55" style="left:426.4px;top:456.4px;font-size:14px;color:#505058;letter-spacing:-0.07px;">Figma prototype (design mobile experience)</span>
<span class="t" id="t56" style="left:436.0px;top:481.8px;font-size:11px;color:#45454d;font-weight:bold;letter-spacing:-0.30px;">V1</span>
<span class="t" id="t57" style="left:462.2px;top:480.2px;font-size:11px;color:#8b8b94;letter-spacing:0.23px;">/Figma</span>
<span class="t" id="t58" style="left:1260.0px;top:470.7px;font-size:14px;color:#505058;letter-spacing:-0.20px;">In progress</span>
<span class="t" id="t59" style="left:1453.3px;top:470.0px;font-size:14px;color:#505058;letter-spacing:-0.49px;">0 of 1</span>
<span class="t" id="t60" style="left:1529.4px;top:460.0px;font-size:14px;color:#505058;letter-spacing:-0.06px;">27 Mar 2023</span>
<span class="t" id="t61" style="left:1529.4px;top:480.0px;font-size:14px;color:#505058;letter-spacing:-0.39px;">09:14 AM</span>
<span class="t" id="t62" style="left:1694.5px;top:460.2px;font-size:13.5px;color:#505058;letter-spacing:0.07px;">Project Manager Mike</span>
<span class="t" id="t63" style="left:1694.5px;top:480.1px;font-size:11.5px;color:#8b8b94;letter-spacing:0.13px;">Ziflow</span>
<span class="t" id="t64" style="left:426.4px;top:558.4px;font-size:14px;color:#505058;letter-spacing:-0.15px;">Figma FigJam file (whiteboard or diagram)</span>
<span class="t" id="t65" style="left:436.0px;top:583.8px;font-size:11px;color:#45454d;font-weight:bold;letter-spacing:-0.30px;">V1</span>
<span class="t" id="t66" style="left:462.2px;top:582.2px;font-size:11px;color:#8b8b94;letter-spacing:0.23px;">/Figma</span>
<span class="t" id="t67" style="left:1260.0px;top:572.7px;font-size:14px;color:#505058;letter-spacing:-0.20px;">In progress</span>
<span class="t" id="t68" style="left:1453.3px;top:572.0px;font-size:14px;color:#505058;letter-spacing:-0.49px;">0 of 1</span>
<span class="t" id="t69" style="left:1529.4px;top:562.0px;font-size:14px;color:#505058;letter-spacing:-0.06px;">27 Mar 2023</span>
<span class="t" id="t70" style="left:1529.4px;top:582.0px;font-size:14px;color:#505058;letter-spacing:-0.27px;">09:10 AM</span>
<span class="t" id="t71" style="left:1694.5px;top:562.2px;font-size:13.5px;color:#505058;letter-spacing:0.07px;">Project Manager Mike</span>
<span class="t" id="t72" style="left:1694.5px;top:582.1px;font-size:11.5px;color:#8b8b94;letter-spacing:0.13px;">Ziflow</span>
<span class="t" id="t73" style="left:426.4px;top:660.4px;font-size:14px;color:#505058;letter-spacing:-0.19px;">Figma design (Figma basics project)</span>
<span class="t" id="t74" style="left:436.0px;top:685.8px;font-size:11px;color:#45454d;font-weight:bold;letter-spacing:-0.30px;">V1</span>
<span class="t" id="t75" style="left:462.2px;top:684.2px;font-size:11px;color:#8b8b94;letter-spacing:0.23px;">/Figma</span>
<span class="t" id="t76" style="left:1260.0px;top:674.7px;font-size:14px;color:#505058;letter-spacing:-0.20px;">In progress</span>
<span class="t" id="t77" style="left:1453.3px;top:674.0px;font-size:14px;color:#505058;letter-spacing:-0.49px;">0 of 1</span>
<span class="t" id="t78" style="left:1529.4px;top:664.0px;font-size:14px;color:#505058;letter-spacing:-0.06px;">27 Mar 2023</span>
<span class="t" id="t79" style="left:1529.4px;top:684.0px;font-size:14px;color:#505058;letter-spacing:-0.27px;">09:01 AM</span>
<span class="t" id="t80" style="left:1694.5px;top:664.2px;font-size:13.5px;color:#505058;letter-spacing:0.07px;">Project Manager Mike</span>
<span class="t" id="t81" style="left:1694.5px;top:684.1px;font-size:11.5px;color:#8b8b94;letter-spacing:0.13px;">Ziflow</span>
<span class="t" id="t82" style="left:426.4px;top:762.4px;font-size:14px;color:#505058;letter-spacing:-0.15px;">Figma design (custom project)</span>
<span class="t" id="t83" style="left:436.0px;top:787.8px;font-size:11px;color:#45454d;font-weight:bold;letter-spacing:-0.30px;">V1</span>
<span class="t" id="t84" style="left:462.2px;top:786.2px;font-size:11px;color:#8b8b94;letter-spacing:0.23px;">/Figma</span>
<span class="t" id="t85" style="left:1260.0px;top:776.7px;font-size:14px;color:#505058;letter-spacing:-0.20px;">In progress</span>
<span class="t" id="t86" style="left:1453.3px;top:776.0px;font-size:14px;color:#505058;letter-spacing:-0.49px;">0 of 1</span>
<span class="t" id="t87" style="left:1529.4px;top:766.0px;font-size:14px;color:#505058;letter-spacing:-0.06px;">27 Mar 2023</span>
<span class="t" id="t88" style="left:1529.4px;top:786.0px;font-size:14px;color:#505058;letter-spacing:0.18px;">09:00 AM</span>
<span class="t" id="t89" style="left:1694.5px;top:766.2px;font-size:13.5px;color:#505058;letter-spacing:0.07px;">Project Manager Mike</span>
<span class="t" id="t90" style="left:1694.5px;top:786.1px;font-size:11.5px;color:#8b8b94;letter-spacing:0.13px;">Ziflow</span>
<span class="t" id="t91" style="left:426.4px;top:864.4px;font-size:14px;color:#505058;letter-spacing:-0.10px;">cmyk-test-print-pdf.pdf</span>
<span class="t" id="t92" style="left:436.0px;top:889.8px;font-size:11px;color:#45454d;font-weight:bold;letter-spacing:-0.30px;">V1</span>
<span class="t" id="t93" style="left:462.2px;top:888.2px;font-size:11px;color:#8b8b94;">/</span>
<span class="t" id="t94" style="left:1260.0px;top:878.7px;font-size:14px;color:#505058;letter-spacing:-0.20px;">In progress</span>
<span class="t" id="t95" style="left:1453.3px;top:878.0px;font-size:14px;color:#505058;letter-spacing:-0.49px;">0 of 1</span>
<span class="t" id="t96" style="left:1529.4px;top:868.0px;font-size:14px;color:#505058;letter-spacing:0.01px;">03 Mar 2023</span>
<span class="t" id="t97" style="left:1529.4px;top:888.0px;font-size:14px;color:#505058;letter-spacing:-0.32px;">10:56 AM</span>
<span class="t" id="t98" style="left:1694.5px;top:868.2px;font-size:13.5px;color:#505058;letter-spacing:0.07px;">Project Manager Mike</span>
<span class="t" id="t99" style="left:1694.5px;top:888.1px;font-size:11.5px;color:#8b8b94;letter-spacing:0.13px;">Ziflow</span>
</div>
</body>
</html>
